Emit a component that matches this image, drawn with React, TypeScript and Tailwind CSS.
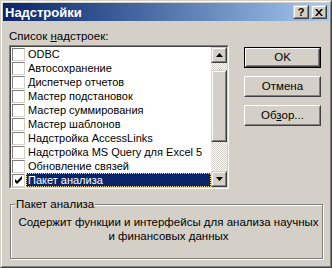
import React from "react";

const items = [
  "ODBC",
  "Автосохранение",
  "Диспетчер отчетов",
  "Мастер подстановок",
  "Мастер суммирования",
  "Мастер шаблонов",
  "Надстройка AccessLinks",
  "Надстройка MS Query для Excel 5",
  "Обновление связей",
  "Пакет анализа",
];

const font = { fontFamily: "'Liberation Sans', Arial, sans-serif" };

function Raised({ className = "", children }: { className?: string; children?: React.ReactNode }) {
  // win2000 3d raised edge
  return (
    <div className={`border border-t-[#d4d0c8] border-l-[#d4d0c8] border-r-[#404040] border-b-[#404040] ${className}`}>
      <div className="w-full h-full border border-t-white border-l-white border-r-[#808080] border-b-[#808080] bg-[#d4d0c8] flex items-center justify-center">
        {children}
      </div>
    </div>
  );
}

function CheckBox({ checked }: { checked?: boolean }) {
  return (
    <div className="w-[13px] h-[13px] shrink-0 bg-white border border-t-[#808080] border-l-[#808080] border-r-[#d4d0c8] border-b-[#d4d0c8] flex items-center justify-center">
      {checked && (
        <svg width="9" height="9" viewBox="0 0 9 9">
          <path d="M1 3v3l2 2 5-5v-3l-5 5z" fill="#000" />
        </svg>
      )}
    </div>
  );
}

function Arrow({ up }: { up?: boolean }) {
  return (
    <svg width="7" height="4" viewBox="0 0 7 4" className={up ? "" : "rotate-180"}>
      <path d="M3.5 0L7 4H0z" fill="#000" />
    </svg>
  );
}

function Button({ label, def }: { label: React.ReactNode; def?: boolean }) {
  return (
    <div className={`w-[77px] h-[21px] ${def ? "border border-black" : ""}`}>
      <div className="w-full h-full border border-t-white border-l-white border-r-[#404040] border-b-[#404040]">
        <div className="w-full h-full border border-t-[#d4d0c8] border-l-[#d4d0c8] border-r-[#808080] border-b-[#808080] flex items-center justify-center text-[11.5px] text-black">
          {label}
        </div>
      </div>
    </div>
  );
}

export default function App() {
  return (
    <div style={font} className="w-[332px] h-[268px] border border-t-[#d4d0c8] border-l-[#d4d0c8] border-r-[#404040] border-b-[#404040]">
      <div className="w-full h-full border border-t-white border-l-white border-r-[#808080] border-b-[#808080] bg-[#d4d0c8] p-px flex flex-col">
        {/* Title bar */}
        <div className="h-[18px] bg-linear-to-r from-[#0a246a] to-[#a6caf0] flex items-center pl-[2px] pr-[2px]">
          <span className="text-white font-bold text-[13px] leading-none flex-1">Надстройки</span>
          <Raised className="w-[16px] h-[14px]">
            <span className="text-black font-bold text-[11px] leading-none">?</span>
          </Raised>
          <Raised className="w-[16px] h-[14px] ml-[2px]">
            <svg width="8" height="7" viewBox="0 0 8 7">
              <path d="M0 0h2l2 2.5L6 0h2L5 3.5 8 7H6L4 4.5 2 7H0l3-3.5z" fill="#000" />
            </svg>
          </Raised>
        </div>

        {/* Body */}
        <div className="flex-1 pl-[6px] pt-[9px] text-[11.5px] text-black">
          <div className="flex">
            <div className="w-[220px]">
              <div className="h-[13px] leading-[13px] mb-[2px]">
                Список <span className="underline">н</span>адстроек:
              </div>
              <div className="w-[220px] border border-t-[#808080] border-l-[#808080] border-r-white border-b-white">
                <div className="border border-t-[#404040] border-l-[#404040] border-r-[#d4d0c8] border-b-[#d4d0c8] bg-white flex h-[142px]">
                  <div className="w-[200px] flex flex-col text-[11px]">
                    {items.map((it, i) => {
                      const sel = i === items.length - 1;
                      return (
                        <div key={it} className="h-[14px] flex items-center pl-px">
                          <CheckBox checked={sel} />
                          <div
                            className={`ml-px flex-1 h-[14px] leading-[12px] pl-px whitespace-nowrap overflow-hidden ${
                              sel ? "bg-[#0a246a] text-white border border-dotted border-[#f5db95]" : "border border-transparent"
                            }`}
                          >
                            {it}
                          </div>
                        </div>
                      );
                    })}
                  </div>
                  <div className="w-[16px] flex flex-col bg-[repeating-conic-gradient(#ffffff_0_25%,#d4d0c8_0_50%)] bg-[length:2px_2px]">
                    <Raised className="w-[16px] h-[16px]">
                      <Arrow up />
                    </Raised>
                    <div className="h-[7px]" />
                    <Raised className="w-[16px] h-[72px]" />
                    <div className="flex-1" />
                    <Raised className="w-[16px] h-[16px]">
                      <Arrow />
                    </Raised>
                  </div>
                </div>
              </div>
            </div>

            <div className="ml-[15px] pt-[17px] flex flex-col gap-[8px]">
              <Button label="OK" def />
              <Button label="Отмена" />
              <Button
                label={
                  <span>
                    Об<span className="underline">з</span>ор...
                  </span>
                }
              />
            </div>
          </div>

          {/* Group box */}
          <div className="relative ml-px mt-[15px] w-[313px] h-[55px] border border-[#808080] shadow-[inset_1px_1px_0_#fff,1px_1px_0_#fff]">
            <span className="absolute -top-[7px] left-[4px] px-px bg-[#d4d0c8] leading-[13px]">Пакет анализа</span>
            <div className="pt-[10px] pl-[4px] text-center leading-[14px]">
              Содержит функции и интерфейсы для анализа научных
              <br />и финансовых данных
            </div>
          </div>
        </div>
      </div>
    </div>
  );
}
